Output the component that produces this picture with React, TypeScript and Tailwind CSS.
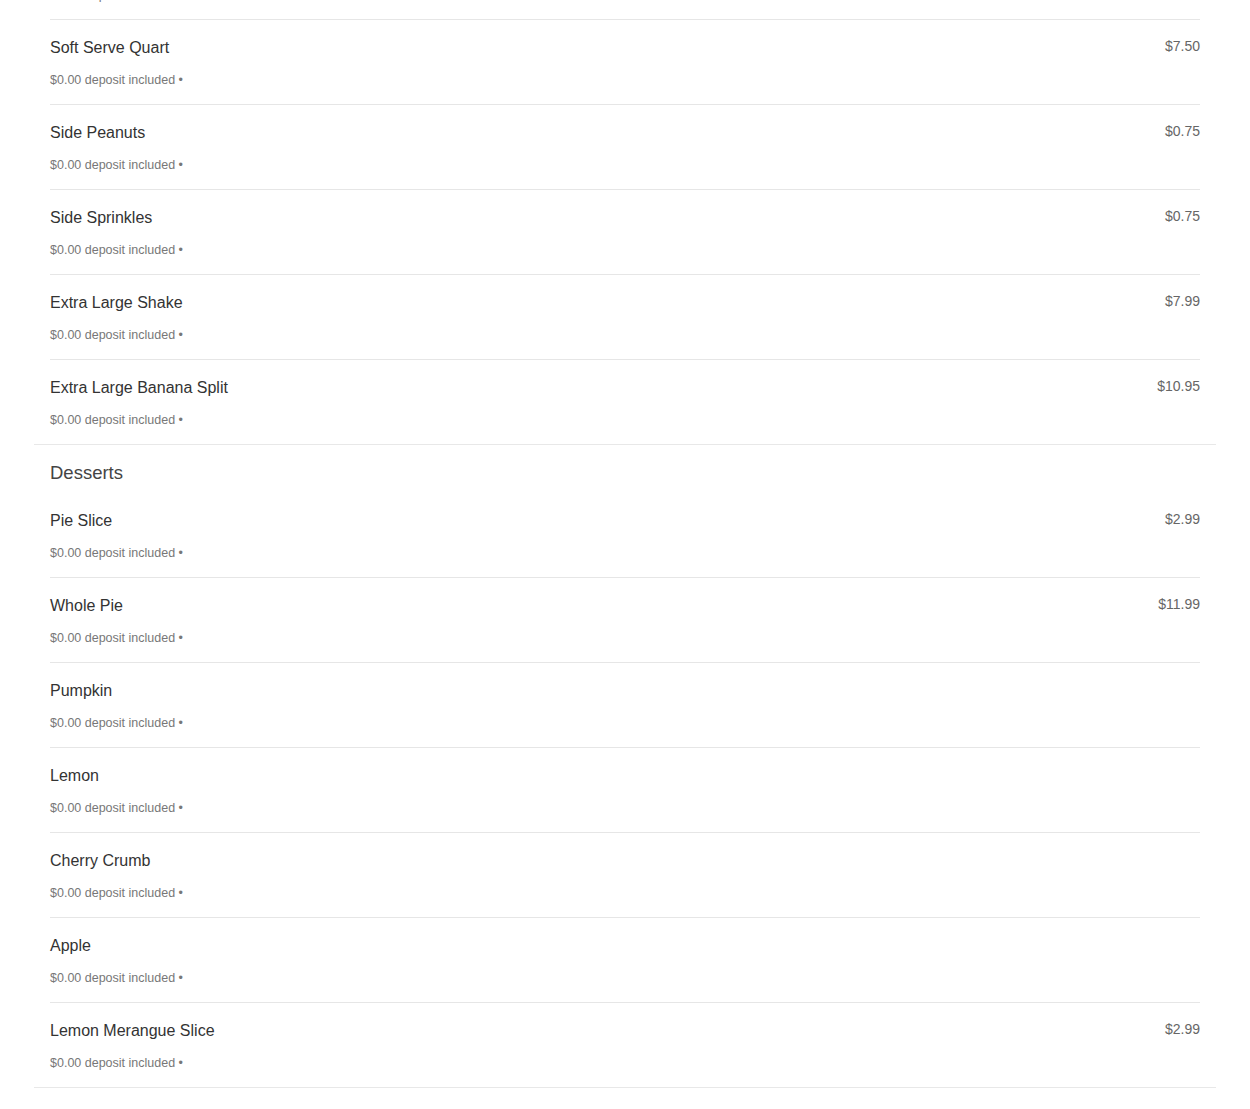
import React from 'react';

interface MenuItem {
  name: string;
  price?: string;
}

interface MenuSection {
  title?: string;
  items: MenuItem[];
}

const SECTIONS: MenuSection[] = [
  {
    items: [
      { name: 'Soft Serve Pint', price: '$4.50' },
      { name: 'Soft Serve Quart', price: '$7.50' },
      { name: 'Side Peanuts', price: '$0.75' },
      { name: 'Side Sprinkles', price: '$0.75' },
      { name: 'Extra Large Shake', price: '$7.99' },
      { name: 'Extra Large Banana Split', price: '$10.95' },
    ],
  },
  {
    title: 'Desserts',
    items: [
      { name: 'Pie Slice', price: '$2.99' },
      { name: 'Whole Pie', price: '$11.99' },
      { name: 'Pumpkin' },
      { name: 'Lemon' },
      { name: 'Cherry Crumb' },
      { name: 'Apple' },
      { name: 'Lemon Merangue Slice', price: '$2.99' },
    ],
  },
  {
    title: 'Beverages',
    items: [{ name: 'Coffee', price: '$1.50' }],
  },
];

function Item({ item, last }: { item: MenuItem; last: boolean }) {
  return (
    <div className={`flex justify-between pt-4 pb-4 ${last ? '' : 'border-b border-[#e6e6e6]'}`}>
      <div className="flex flex-col">
        <div className="text-[16px] leading-6 text-[#333]">{item.name}</div>
        <div className="mt-3 text-[12.5px] leading-4 text-[#777]">$0.00 deposit included •</div>
      </div>
      {item.price && <div className="text-[14px] leading-5 text-[#666]">{item.price}</div>}
    </div>
  );
}

export default function App() {
  return (
    <div className="min-h-screen bg-white overflow-hidden" style={{ fontFamily: '"Liberation Sans", Arial, sans-serif' }}>
      <div className="mx-[34px] -mt-[65px]">
        {SECTIONS.map((section, si) => (
          <div key={si} className="border-b border-[#e8e8e8] px-4">
            {section.title && (
              <h2 className="pt-4 mb-2 text-[18.5px] leading-6 text-[#444]">{section.title}</h2>
            )}
            {section.items.map((item, i) => (
              <Item key={item.name} item={item} last={i === section.items.length - 1} />
            ))}
          </div>
        ))}
      </div>
    </div>
  );
}
